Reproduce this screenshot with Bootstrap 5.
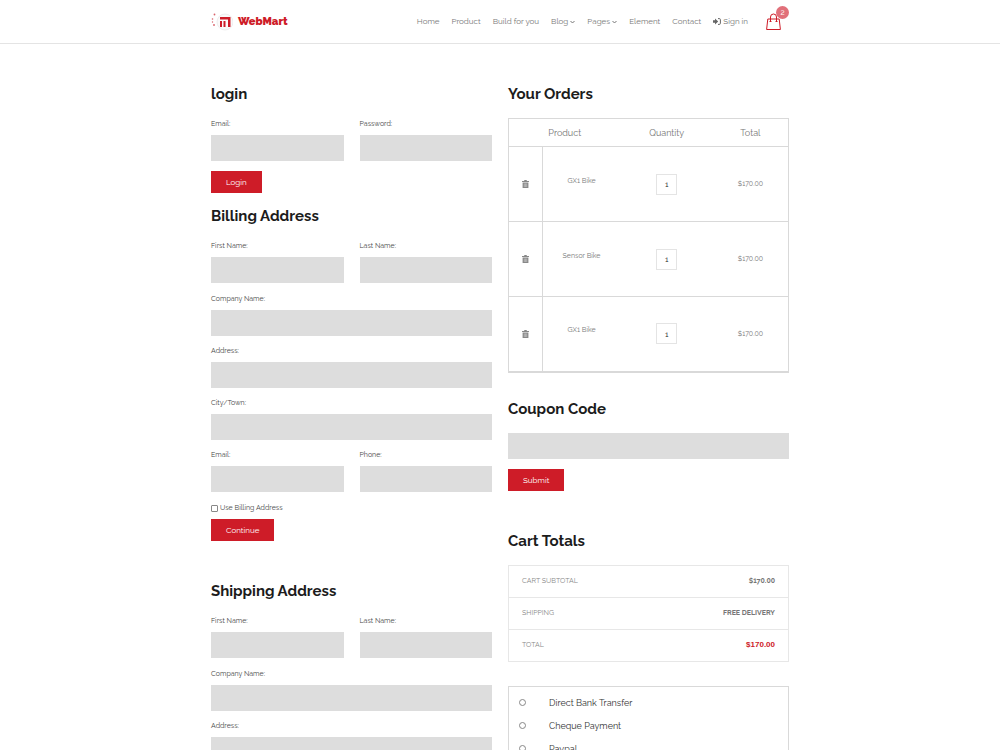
<!DOCTYPE html>
<html lang="en">
<head>
<meta charset="utf-8">
<meta name="viewport" content="width=device-width, initial-scale=1">
<title>WebMart - Checkout</title>
<link href="https://cdn.jsdelivr.net/npm/bootstrap@5.3.0/dist/css/bootstrap.min.css" rel="stylesheet">
<script src="https://cdn.jsdelivr.net/npm/bootstrap@5.3.0/dist/js/bootstrap.bundle.min.js" defer></script>
<style>
:root { --brand: #ce1c28; --field: #ddd; --line: #d9d9d9; --soft: #e7e7e7; }
body { font-family: Raleway, Lato, sans-serif; font-size: 8px; line-height: 16px; color: #444; background: #fff; }
.page-wrap { max-width: 594px; padding-left: 8px; padding-right: 8px; }
.page-row { --bs-gutter-x: 16px; }
.site-header { border-bottom: 1px solid #e4e4e4; padding-bottom: 1px; }
.site-header .page-wrap { height: 42px; }
.brand-link { color: var(--brand); font: 900 11px/16px Raleway, Lato, sans-serif; gap: 5px; padding-top: 2px; }
.main-nav { gap: 12px; }
.main-nav a { color: #777; text-decoration: none; white-space: nowrap; }
.bag-link { margin-left: 6px; margin-right: 8px; }
.main-nav .bag-count { top: -7px; left: 10px; width: 13px; height: 13px; line-height: 13px; border-radius: 50%; background: #e1707a; color: #fff; text-align: center; }
.content-area { padding-top: 40px; }
h2 { font-size: 15px; line-height: 20px; font-weight: 700; color: #1c1c1c; margin: 0 0 12px; }
.side h2 { margin-bottom: 14px; }
.login-form { margin-bottom: 13px; }
.billing-form { margin-bottom: 40px; }
.field label { display: block; font-size: 7px; margin-bottom: 3px; }
.field-box { display: block; width: 100%; height: 26px; border: 0; border-radius: 0; background: var(--field); padding: 0 8px; font-size: 8px; }
.field { margin-bottom: 7px; }
.field-pair { margin-bottom: 8px; }
.field-pair .field { margin-bottom: 0; flex: 1 1 0; }
.login-form .field-pair, .coupon .field-box { margin-bottom: 10px; }
.btn-brand { --bs-btn-color: #fff; --bs-btn-bg: var(--brand); --bs-btn-hover-color: #fff; --bs-btn-hover-bg: #b01520; --bs-btn-border-width: 0; --bs-btn-border-radius: 0; --bs-btn-font-size: 8px; --bs-btn-padding-x: 15px; --bs-btn-padding-y: 3px; --bs-btn-line-height: 16px; display: block; }
.check-line { font-size: 7px; margin-bottom: 3px; gap: 2px; }
.check-line input, .pay-box input { appearance: none; flex: none; width: 7px; height: 7px; margin: 0; border: 1px solid #888; border-radius: 1px; background: #fff; }
.pay-box input { border-radius: 50%; }
.check-line input:checked, .pay-box input:checked { background: var(--brand); }
.orders { table-layout: fixed; border: 1px solid var(--line); border-bottom: 2px solid var(--line); text-align: center; color: #777; font-size: 7px; margin-bottom: 26px; }
.orders th { font-weight: 400; font-size: 9px; height: 28px; }
.orders tbody tr { border-top: 1px solid var(--line); height: 75px; }
.orders td:first-child { border-right: 1px solid var(--line); }
.orders .item-name { padding-bottom: 8px; }
.c-del { width: 12%; } .c-item { width: 28%; } .c-qty { width: 33%; } .c-sum { width: 27%; }
.trash { display: inline-block; border: 0; padding: 0; background: none; line-height: 0; }
.qty { display: inline-block; width: 21px; height: 21px; border: 1px solid #e4e4e4; text-align: center; font-size: 8px; color: #222; padding: 0; }
.coupon { margin-bottom: 40px; }
.totals { border: 1px solid var(--soft); color: #888; font-size: 7px; margin-bottom: 24px; }
.totals tr + tr { border-top: 1px solid var(--soft); }
.totals th, .totals td { height: 32px; padding: 0 13px; font-weight: 400; }
.totals td { text-align: right; color: #777; font-weight: 700; }
.totals .grand { color: var(--brand); font: 700 8px/16px "Liberation Sans", sans-serif; }
.pay-box { border: 1px solid var(--line); padding: 8px 10px; }
.pay-box label { font-size: 9px; line-height: 16px; gap: 23px; margin-bottom: 7px; color: #333; }
</style>
</head>
<body>
<header class="site-header">
  <div class="page-wrap mx-auto d-flex align-items-center justify-content-between">
    <a href="#" class="brand-link d-flex align-items-center text-decoration-none">
      <svg width="22" height="18" viewBox="0 0 22 18" aria-hidden="true">
        <circle cx="14" cy="9" r="8" fill="#fafafa" stroke="#eee"/>
        <path d="M9 4h10.500v10h-2.500V6.500H9z" fill="#ce1c28"/>
        <path d="M10 8v6M13.500 8v6" stroke="#ce1c28" stroke-width="2"/>
        <g fill="#d8626a"><circle cx="3.500" cy="1.500" r=".9"/><circle cx="1.500" cy="6" r=".8"/><circle cx="3" cy="12" r=".9"/><circle cx="1.500" cy="9" r=".7"/></g>
      </svg>
      WebMart
    </a>
    <nav class="main-nav d-flex align-items-center">
      <a href="#">Home</a>
      <a href="#">Product</a>
      <a href="#">Build for you</a>
      <a href="#">Blog <svg width="5" height="4" viewBox="0 0 5 4" aria-hidden="true"><path d="M.5 1l2 2 2-2" fill="none" stroke="#777"/></svg></a>
      <a href="#">Pages <svg width="5" height="4" viewBox="0 0 5 4" aria-hidden="true"><path d="M.5 1l2 2 2-2" fill="none" stroke="#777"/></svg></a>
      <a href="#">Element</a>
      <a href="#">Contact</a>
      <a href="#"><svg width="8" height="7" viewBox="0 0 8 7" aria-hidden="true"><path d="M0 2.200h2V.5L5.200 3.500 2 6.500V4.800H0z" fill="#666"/><path d="M5 .6h1.200q1.200 0 1.200 1v3.800q0 1-1.200 1H5" fill="none" stroke="#666"/></svg> Sign in</a>
      <a href="#" class="bag-link position-relative d-block" aria-label="Cart">
        <svg class="d-block" width="15" height="17" viewBox="0 0 15 17" fill="none" stroke="#ce1c28" aria-hidden="true"><path d="M1.800 6h11.400l1.200 10.500H.6z"/><path d="M4.500 8.500V4a3 3 0 0 1 6 0v4.500"/><path d="M3.500 8.500h2M9.500 8.500h2"/></svg>
        <span class="bag-count position-absolute">2</span>
      </a>
    </nav>
  </div>
</header>
<main class="page-wrap content-area mx-auto">
  <div class="row page-row">
    <div class="col-6">
      <form class="login-form">
        <h2>login</h2>
        <div class="field-pair d-flex gap-3">
          <div class="field"><label for="lEmail">Email:</label><input class="field-box" id="lEmail" type="email"></div>
          <div class="field"><label for="lPass">Password:</label><input class="field-box" id="lPass" type="password"></div>
        </div>
        <button type="button" class="btn btn-brand">Login</button>
      </form>
      <form class="billing-form">
        <h2>Billing Address</h2>
        <div class="field-pair d-flex gap-3">
          <div class="field"><label for="bFirst">First Name:</label><input class="field-box" id="bFirst" type="text"></div>
          <div class="field"><label for="bLast">Last Name:</label><input class="field-box" id="bLast" type="text"></div>
        </div>
        <div class="field"><label for="bComp">Company Name:</label><input class="field-box" id="bComp" type="text"></div>
        <div class="field"><label for="bAddr">Address:</label><input class="field-box" id="bAddr" type="text"></div>
        <div class="field"><label for="bCity">City/Town:</label><input class="field-box" id="bCity" type="text"></div>
        <div class="field-pair d-flex gap-3">
          <div class="field"><label for="bEmail">Email:</label><input class="field-box" id="bEmail" type="email"></div>
          <div class="field"><label for="bPhone">Phone:</label><input class="field-box" id="bPhone" type="tel"></div>
        </div>
        <div class="check-line d-flex align-items-center"><input id="useBill" type="checkbox"><label for="useBill">Use Billing Address</label></div>
        <button type="button" class="btn btn-brand">Continue</button>
      </form>
      <form>
        <h2>Shipping Address</h2>
        <div class="field-pair d-flex gap-3">
          <div class="field"><label for="sFirst">First Name:</label><input class="field-box" id="sFirst" type="text"></div>
          <div class="field"><label for="sLast">Last Name:</label><input class="field-box" id="sLast" type="text"></div>
        </div>
        <div class="field"><label for="sComp">Company Name:</label><input class="field-box" id="sComp" type="text"></div>
        <div class="field"><label for="sAddr">Address:</label><input class="field-box" id="sAddr" type="text"></div>
      </form>
    </div>
    <div class="col-6 side">
      <section>
        <h2>Your Orders</h2>
        <table class="orders w-100">
          <colgroup><col class="c-del"><col class="c-item"><col class="c-qty"><col class="c-sum"></colgroup>
          <thead><tr><th colspan="2">Product</th><th>Quantity</th><th>Total</th></tr></thead>
          <tbody>
            <tr>
              <td><button type="button" class="trash" aria-label="Remove"><svg width="7" height="8" viewBox="0 0 7 8"><path d="M0 1h2l.5-1h2L5 1h2v1H0zM.6 2.500h5.800V8H.6z" fill="#888"/><path d="M2.300 3.500v3.500M3.500 3.500v3.500M4.700 3.500v3.500" stroke="#ddd" stroke-width=".5"/></svg></button></td>
              <td class="item-name">GX1 Bike</td>
              <td><input class="qty" type="text" value="1" aria-label="Quantity of GX1 Bike"></td>
              <td>$170.00</td>
            </tr>
            <tr>
              <td><button type="button" class="trash" aria-label="Remove"><svg width="7" height="8" viewBox="0 0 7 8"><path d="M0 1h2l.5-1h2L5 1h2v1H0zM.6 2.500h5.800V8H.6z" fill="#888"/><path d="M2.300 3.500v3.500M3.500 3.500v3.500M4.700 3.500v3.500" stroke="#ddd" stroke-width=".5"/></svg></button></td>
              <td class="item-name">Sensor Bike</td>
              <td><input class="qty" type="text" value="1" aria-label="Quantity of Sensor Bike"></td>
              <td>$170.00</td>
            </tr>
            <tr>
              <td><button type="button" class="trash" aria-label="Remove"><svg width="7" height="8" viewBox="0 0 7 8"><path d="M0 1h2l.5-1h2L5 1h2v1H0zM.6 2.500h5.800V8H.6z" fill="#888"/><path d="M2.300 3.500v3.500M3.500 3.500v3.500M4.700 3.500v3.500" stroke="#ddd" stroke-width=".5"/></svg></button></td>
              <td class="item-name">GX1 Bike</td>
              <td><input class="qty" type="text" value="1" aria-label="Quantity of GX1 Bike"></td>
              <td>$170.00</td>
            </tr>
          </tbody>
        </table>
      </section>
      <form class="coupon">
        <h2 id="couponTitle">Coupon Code</h2>
        <input class="field-box" type="text" aria-labelledby="couponTitle">
        <button type="button" class="btn btn-brand">Submit</button>
      </form>
      <section>
        <h2>Cart Totals</h2>
        <table class="totals w-100">
          <tbody>
            <tr><th scope="row">CART SUBTOTAL</th><td>$170.00</td></tr>
            <tr><th scope="row">SHIPPING</th><td>FREE DELIVERY</td></tr>
            <tr><th scope="row">TOTAL</th><td class="grand">$170.00</td></tr>
          </tbody>
        </table>
      </section>
      <form class="pay-box">
        <label class="d-flex align-items-center"><input type="radio" name="pay">Direct Bank Transfer</label>
        <label class="d-flex align-items-center"><input type="radio" name="pay">Cheque Payment</label>
        <label class="d-flex align-items-center"><input type="radio" name="pay">Paypal</label>
      </form>
    </div>
  </div>
</main>
</body>
</html>
